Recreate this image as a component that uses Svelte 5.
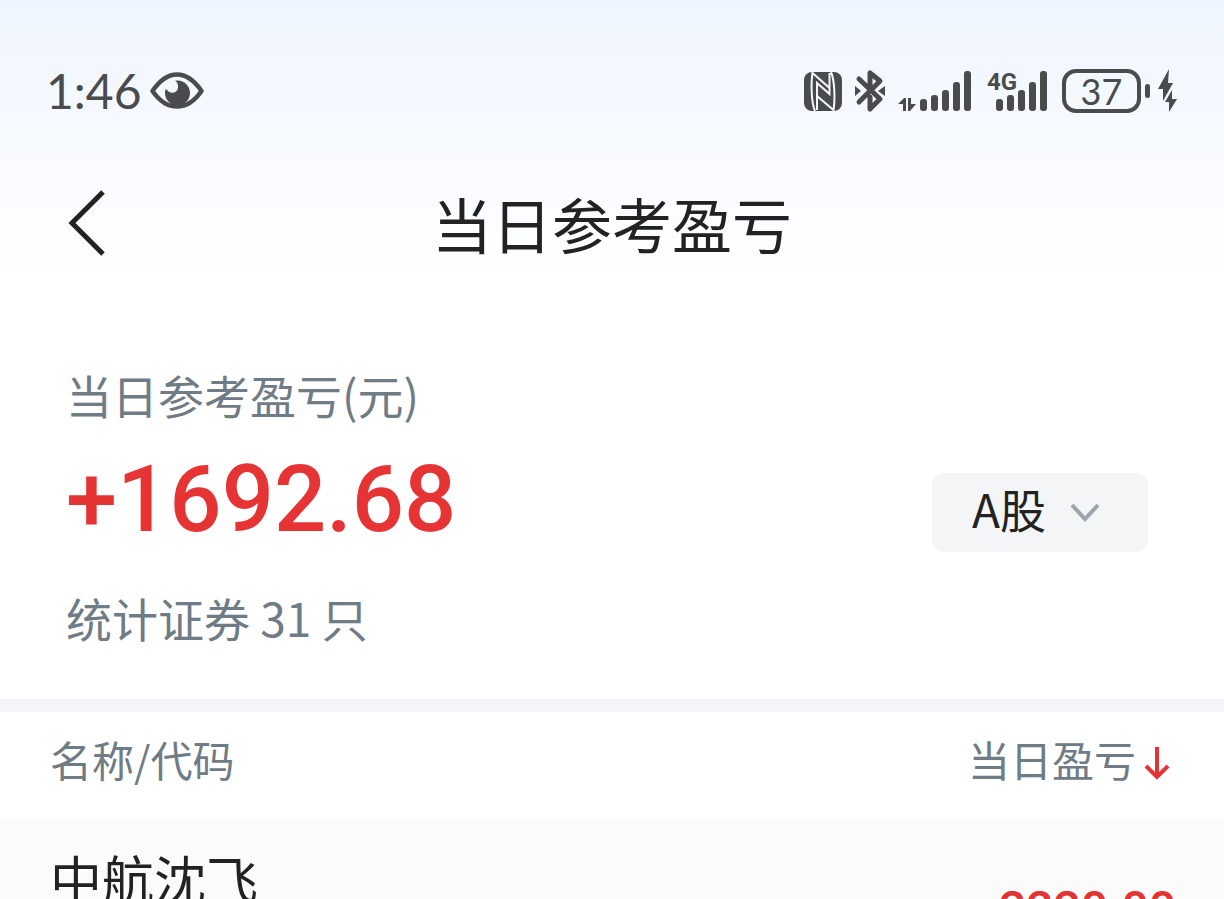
<script>
  let market = "a";
  let descending = true;

  const markets = [
    { id: "a", name: "A股" },
    { id: "hk", name: "港股通" },
  ];
  let rows = [{ name: "中航沈飞", profit: "2220.00" }];
  const bars = [12, 16, 21, 29, 40];

  function sort() {
    descending = !descending;
    rows = [...rows].sort((a, b) =>
      descending ? b.profit - a.profit : a.profit - b.profit
    );
  }
</script>

<div class="page">
  <div class="top">
    <div class="status">
      <div class="side">
        <span class="time">1:46</span>
        <svg width="54" height="38" viewBox="0 0 54 38">
          <path
            d="M2.500 19 C10 8 18 2.500 27 2.500 S44 8 51.500 19 C44 30 36 34.500 27 34.500 S10 30 2.500 19Z"
            fill="none"
            stroke="#4a4b4d"
            stroke-width="4.500"
            stroke-linejoin="round"
          />
          <circle cx="27.500" cy="21" r="12.500" fill="#4a4b4d" />
          <path
            d="M13 16 L22 7 Q28 9 28 14 A6 6 0 0 1 17 18 Q16 17 15 17Z"
            fill="#f3f7fe"
          />
        </svg>
      </div>
      <div class="side icons">
        <svg width="38" height="39" viewBox="0 0 38 39">
          <rect width="38" height="39" rx="8" fill="#4a4b4d" />
          <path
            d="M11 39 C7 30 7 10 8.500 1 L25.500 16 V22 L13 11 V38 M27 0 C31 9 31 29 29.500 38 L13 24 M25.500 1 V16"
            fill="none"
            stroke="#f3f7fe"
            stroke-width="2"
          />
        </svg>
        <svg width="30" height="42" viewBox="0 0 30 42">
          <path
            d="M4 9 L25 29 L15 39 V27 M4 32 L25 11 L15 3 V18"
            fill="none"
            stroke="#4a4b4d"
            stroke-width="5"
            stroke-linecap="round"
            stroke-linejoin="round"
          />
          <path d="M0 16 L6 21 L0 26Z M30 16 L23 21 L30 26Z" fill="#4a4b4d" />
        </svg>
        <svg width="76" height="42" viewBox="0 0 76 42">
          <path
            d="M0 34 L6 28 H8 V41 H5 V34Z M10 28 H13 V34 H18 L12 41 H10Z"
            fill="#4a4b4d"
          />
          {#each bars as h, i}
            <rect x={22 + i * 11} y={41 - h} width="7" height={h} rx="3" fill="#4a4b4d" />
          {/each}
        </svg>
        <svg width="62" height="42" viewBox="0 0 62 42">
          <text x="0" y="20" class="net">4G</text>
          {#each bars as h, i}
            <rect x={9 + i * 11} y={41 - h} width="7" height={h} rx="3" fill="#4a4b4d" />
          {/each}
        </svg>
        <div class="power">
          <span class="battery">37</span>
          <span class="cap"></span>
          <svg width="19" height="44" viewBox="0 0 19 44">
            <path
              d="M11 0 L0 20 H5 L5 32 L15 14 H10Z M14 21 L7 33 H11 L11 43 L19 30 H14Z"
              fill="#4a4b4d"
            />
          </svg>
        </div>
      </div>
    </div>

    <header>
      <button class="back" aria-label="返回">
        <svg width="38" height="66" viewBox="0 0 38 66">
          <path d="M35 2 L4 33 L35 64" fill="none" stroke="#222" stroke-width="5" />
        </svg>
      </button>
      <h1>当日参考盈亏</h1>
    </header>
  </div>

  <section class="summary">
    <div>
      <p>当日参考盈亏(元)</p>
      <p class="total">+1692.68</p>
      <p>统计证券 31 只</p>
    </div>
    <div class="market">
      <select bind:value={market} aria-label="市场">
        {#each markets as m}
          <option value={m.id}>{m.name}</option>
        {/each}
      </select>
      <svg width="30" height="20" viewBox="0 0 30 20">
        <path d="M2 2 L15 16 L28 2" fill="none" stroke="#9da6ae" stroke-width="4" />
      </svg>
    </div>
  </section>

  <table>
    <thead>
      <tr>
        <th>名称/代码</th>
        <th class="right">
          <button class="sort" on:click={sort}>
            当日盈亏
            <svg class:up={!descending} width="26" height="34" viewBox="0 0 26 34">
              <path
                d="M13 1 V31 M2 20 L13 31 L24 20"
                fill="none"
                stroke="#e23434"
                stroke-width="4"
              />
            </svg>
          </button>
        </th>
      </tr>
    </thead>
    <tbody>
      {#each rows as row}
        <tr>
          <td class="name">{row.name}</td>
          <td class="right profit">{row.profit}</td>
        </tr>
      {/each}
    </tbody>
  </table>
</div>

<style>
  :global(body) {
    background: #fff;
  }
  .page {
    height: 100vh;
    overflow: hidden;
    font-family: "Noto Sans CJK SC", sans-serif;
    color: #222;
  }
  .top {
    background: linear-gradient(#eff5ff, #fff);
  }
  .status {
    display: flex;
    justify-content: space-between;
    align-items: center;
    height: 64px;
    padding: 59px 47px 0 46px;
    color: #4a4b4d;
  }
  .side {
    display: flex;
    align-items: center;
    gap: 8px;
  }
  .icons {
    gap: 13px;
  }
  .time {
    font: 48px/60px Lato, sans-serif;
  }
  .net {
    font: bold 24px Roboto, sans-serif;
    fill: #4a4b4d;
  }
  .power {
    display: flex;
    align-items: center;
    gap: 4px;
  }
  .power svg {
    margin-left: 4px;
  }
  .battery {
    box-sizing: border-box;
    width: 79px;
    height: 44px;
    border: 4px solid #4a4b4d;
    border-radius: 14px;
    font: 36px/36px Lato, sans-serif;
    text-align: center;
  }
  .cap {
    width: 5px;
    height: 14px;
    border-radius: 3px;
    background: #4a4b4d;
  }
  header {
    display: grid;
    grid-template-columns: 1fr auto 1fr;
    align-items: center;
    box-sizing: border-box;
    height: 167px;
    padding: 32px 68px 0;
  }
  button {
    padding: 0;
    border: 0;
    background: none;
    font: inherit;
    color: inherit;
    cursor: pointer;
  }
  svg {
    display: block;
    flex: none;
    overflow: visible;
  }
  .back {
    justify-self: start;
  }
  h1 {
    margin: 0;
    font-size: 60px;
    line-height: 80px;
    font-weight: 400;
  }
  .summary {
    display: flex;
    justify-content: space-between;
    align-items: center;
    padding: 72px 76px 50px 66px;
    border-bottom: 13px solid #f4f5f9;
  }
  p {
    margin: 0;
    font-size: 46px;
    line-height: 64px;
    color: #6f7b85;
  }
  .total {
    padding: 10px 0 21px;
    font: 500 92px/128px Roboto, sans-serif;
    color: #e63434;
  }
  .market {
    display: grid;
    align-items: center;
    padding-top: 14px;
  }
  .market > * {
    grid-area: 1 / 1;
  }
  .market svg {
    justify-self: end;
    margin-right: 48px;
    pointer-events: none;
  }
  select {
    appearance: none;
    width: 216px;
    height: 79px;
    padding: 0 90px 10px 40px;
    border: 0;
    border-radius: 12px;
    background: #f3f5f7;
    font: 46px "Noto Sans CJK SC", sans-serif;
    color: #222;
  }
  table {
    width: 100%;
    border-collapse: collapse;
  }
  th,
  td {
    padding: 0 48px 0 50px;
    text-align: left;
    font-weight: 400;
  }
  th {
    height: 94px;
    padding: 0 54px 12px 50px;
    font-size: 42px;
    line-height: 42px;
    color: #6f7b85;
  }
  td {
    height: 180px;
    background: #fbfbfb;
  }
  .right {
    text-align: right;
  }
  .sort {
    display: inline-flex;
    align-items: flex-end;
    gap: 8px;
  }
  .up {
    transform: rotate(180deg);
  }
  .name {
    box-sizing: border-box;
    padding-top: 20px;
    font-size: 52px;
    line-height: 80px;
    vertical-align: top;
  }
  .profit {
    font: 500 48px Roboto, sans-serif;
    color: #e23434;
  }
</style>
